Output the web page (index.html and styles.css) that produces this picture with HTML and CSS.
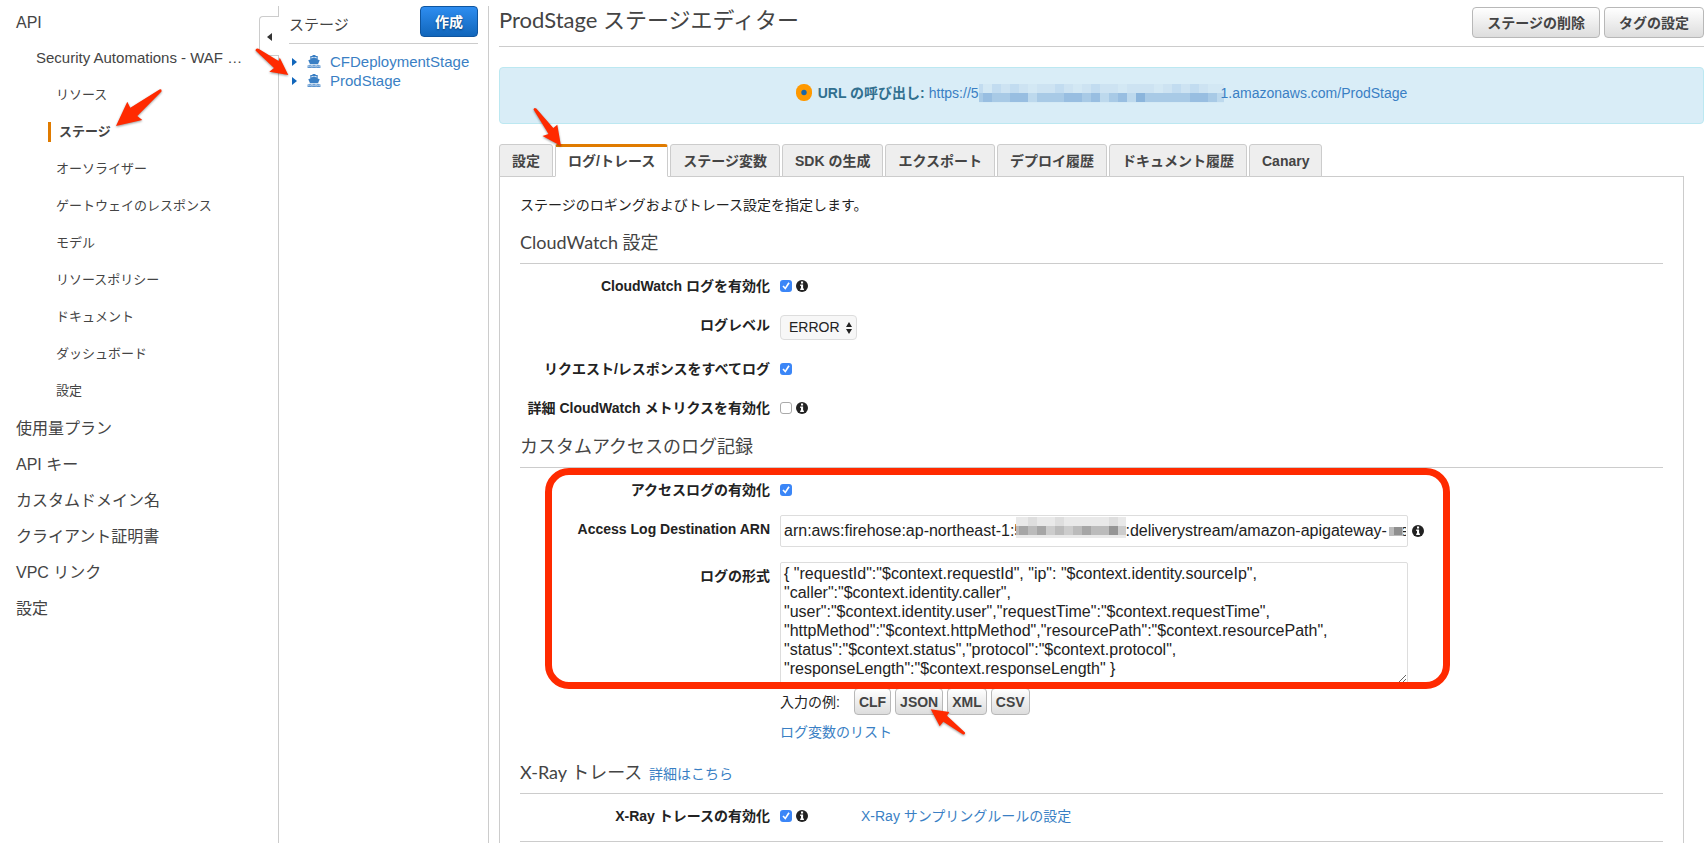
FILE: index.html
```html
<!DOCTYPE html>
<html lang="ja">
<head>
<meta charset="utf-8">
<title>ProdStage ステージエディター</title>
<link rel="stylesheet" href="styles.css">
</head>
<body>
<svg class="defs" aria-hidden="true">
  <symbol id="info" viewBox="0 0 12 12">
    <circle cx="6" cy="6" r="6" fill="#222"/>
    <path d="M5 1.600h2.100v1.800H5zM4.200 4.500h2.900v4h.8V10H4.200V8.500H5V6h-.8z" fill="#fff"/>
  </symbol>
  <symbol id="ship" viewBox="0 0 14 13">
    <path d="M5.500 0h3v1h2.200v3.400l2 .8-1.700 4.100H3L1.300 5.200l2-.8V1h2.200z" fill="#3a7fc4"/>
    <path d="M4.400 2.100h5.200v1.300L7 2.600l-2.600.8z" fill="#cfe0f2"/>
    <path d="M.5 12.900v-2.300c1 0 1.400-.8 2.200-.8s1.200.8 2.100.8 1.300-.8 2.200-.8 1.300.8 2.200.8 1.300-.8 2.100-.8 1.200.8 2.200.8v2.300z" fill="#5b94cf"/>
    <path d="M.5 11.900c1 0 1.400-.8 2.200-.8s1.200.8 2.100.8 1.300-.8 2.200-.8 1.300.8 2.200.8 1.300-.8 2.100-.8 1.200.8 2.200.8" fill="none" stroke="#fff" stroke-width=".5"/>
  </symbol>
</svg>
<div class="app">
  <nav class="sidebar">
    <a class="item" href="#">API</a>
    <a class="item api-name" href="#">Security Automations - WAF …</a>
    <ul class="sub">
      <li><a href="#">リソース</a></li>
      <li class="current"><a href="#">ステージ</a>
        <svg class="arrow arrow-nav" width="52" height="42" viewBox="0 0 52 42"><path d="M3 39 14.300 14.700l3 6L46.500 2.500q2.500-.7 2 2L24.300 29l5 4z"/></svg>
      </li>
      <li><a href="#">オーソライザー</a></li>
      <li><a href="#">ゲートウェイのレスポンス</a></li>
      <li><a href="#">モデル</a></li>
      <li><a href="#">リソースポリシー</a></li>
      <li><a href="#">ドキュメント</a></li>
      <li><a href="#">ダッシュボード</a></li>
      <li><a href="#">設定</a></li>
    </ul>
    <a class="item" href="#">使用量プラン</a>
    <a class="item" href="#">API キー</a>
    <a class="item" href="#">カスタムドメイン名</a>
    <a class="item" href="#">クライアント証明書</a>
    <a class="item" href="#">VPC リンク</a>
    <a class="item" href="#">設定</a>
    <button class="collapse" type="button" aria-label="折りたたむ"><svg width="5" height="8" viewBox="0 0 5 8"><path d="M5 0v8L0 4z" fill="#333"/></svg></button>
  </nav>

  <section class="stages">
    <header class="stages-head">
      <h2>ステージ</h2>
      <button class="btn primary" type="button">作成</button>
    </header>
    <ul class="tree">
      <li><svg width="5" height="8" viewBox="0 0 5 8"><path d="M0 0l5 4-5 4z" fill="#1166bb"/></svg><svg class="ship" width="14" height="13"><use href="#ship"/></svg><a href="#">CFDeploymentStage</a></li>
      <li><svg width="5" height="8" viewBox="0 0 5 8"><path d="M0 0l5 4-5 4z" fill="#1166bb"/></svg><svg class="ship" width="14" height="13"><use href="#ship"/></svg><a href="#">ProdStage</a>
        <svg class="arrow arrow-tree" width="40" height="34" viewBox="0 0 40 34"><path d="M2.500 3.500q0-2.500 3-1.800L25.700 14l1-3.500L35.300 28l-19-3.300 4.700-3.700z"/></svg>
      </li>
    </ul>
  </section>

  <main class="editor">
    <header class="editor-head">
      <h1>ProdStage ステージエディター</h1>
      <div class="actions">
        <button class="btn" type="button">ステージの削除</button>
        <button class="btn" type="button">タグの設定</button>
      </div>
    </header>

    <div class="invoke">
      <svg width="16" height="17" viewBox="0 0 16 17"><rect width="16" height="17" rx="7.500" fill="#f90"/><circle cx="8" cy="8.500" r="2.700" fill="#1a66a8"/></svg>
      <strong>URL の呼び出し:</strong>
      <a href="#">https://5<svg class="mosaic" width="245" height="19" viewBox="0 0 245 19" shape-rendering="crispEdges">
        <path d="M0 0h245v9H0z" fill="#cde3f2"/>
        <path d="M0 0h4v9H0zM13 0h9v9h-9zM31 0h9v9h-9zM76 0h9v9h-9zM112 0h9v9h-9zM193 0h9v9h-9zM211 0h9v9h-9z" fill="#c2dcf0"/>
        <path d="M4 0h9v9H4zM49 0h9v9h-9zM94 0h9v9h-9zM139 0h9v9h-9zM175 0h9v9h-9zM229 0h16v9h-16z" fill="#d3e8f4"/>
        <path d="M0 9h245v9H0z" fill="#a8cae6"/>
        <path d="M4 9h9v9H4zM31 9h18v9H31zM85 9h18v9H85zM112 9h9v9h-9zM139 9h9v9h-9zM211 9h18v9h-18z" fill="#98bee1"/>
        <path d="M157 9h9v9h-9z" fill="#8bb5dc"/>
        <path d="M49 9h9v9h-9zM121 9h9v9h-9zM148 9h9v9h-9zM238 9h7v9h-7z" fill="#bdd9ed"/>
        <path d="M0 18h245v1H0z" fill="#d5eaf5"/></svg>1.amazonaws.com/ProdStage</a>
    </div>

    <div class="tabs" role="tablist">
      <button type="button" role="tab">設定</button>
      <button type="button" role="tab" class="active" aria-selected="true">ログ/トレース<svg class="arrow arrow-tab" width="36" height="44" viewBox="0 0 36 44"><path d="M2.500 3.500q.5-2.500 2.800-1L22.300 22l4-3.300L30 40l-18.500-10 6-2z"/></svg></button>
      <button type="button" role="tab">ステージ変数</button>
      <button type="button" role="tab">SDK の生成</button>
      <button type="button" role="tab">エクスポート</button>
      <button type="button" role="tab">デプロイ履歴</button>
      <button type="button" role="tab">ドキュメント履歴</button>
      <button type="button" role="tab">Canary</button>
    </div>

    <form class="panel">
      <p class="lead">ステージのロギングおよびトレース設定を指定します。</p>

      <h3>CloudWatch 設定</h3>
      <div class="rows">
        <div class="row"><label for="cw">CloudWatch ログを有効化</label>
          <div class="control"><input type="checkbox" id="cw" checked><svg width="12" height="12"><use href="#info"/></svg></div></div>
        <div class="row"><label for="level">ログレベル</label>
          <div class="control"><div class="select"><select id="level"><option>ERROR</option></select><svg width="6" height="12" viewBox="0 0 6 12"><path d="M3 0l3 5H0zM3 12L0 7h6z" fill="#222"/></svg></div></div></div>
        <div class="row"><label for="full">リクエスト/レスポンスをすべてログ</label>
          <div class="control"><input type="checkbox" id="full" checked></div></div>
        <div class="row"><label for="metrics">詳細 CloudWatch メトリクスを有効化</label>
          <div class="control"><input type="checkbox" id="metrics"><svg width="12" height="12"><use href="#info"/></svg></div></div>
      </div>

      <h3>カスタムアクセスのログ記録</h3>
      <div class="rows access">
        <div class="row"><label for="acc">アクセスログの有効化</label>
          <div class="control"><input type="checkbox" id="acc" checked></div></div>
        <div class="row tall"><label for="arn">Access Log Destination ARN</label>
          <div class="control"><div class="arn"><input type="text" id="arn" value="arn:aws:firehose:ap-northeast-1:5&nbsp;&nbsp;&nbsp;&nbsp;&nbsp;&nbsp;&nbsp;&nbsp;&nbsp;&nbsp;&nbsp;&nbsp;&nbsp;&nbsp;&nbsp;&nbsp;&nbsp;&nbsp;&nbsp;&nbsp;&nbsp;&nbsp;&nbsp;:deliverystream/amazon-apigateway-&nbsp;&nbsp;&nbsp;e">
            <svg class="mask-id" width="110" height="21" viewBox="0 0 110 21" shape-rendering="crispEdges"><path d="M0 0h110v21H0z" fill="#e9e9e9"/><path d="M12 0h9v9h-9zM39 0h9v9h-9zM93 0h9v9h-9z" fill="#dedede"/><path d="M0 9h110v9H0z" fill="#bbb"/><path d="M3 9h9v9H3zM21 9h9v9h-9zM66 9h9v9h-9z" fill="#a6a6a6"/><path d="M93 9h9v9h-9z" fill="#959595"/><path d="M30 9h9v9h-9zM48 9h9v9h-9zM102 9h8v9h-8z" fill="#ccc"/></svg>
            <svg class="mask-tail" width="14" height="10" viewBox="0 0 14 10" shape-rendering="crispEdges"><path d="M0 1h14v9H0z" fill="#bbb"/><path d="M5 1h8v8H5z" fill="#8f8f8f"/></svg>
          </div><svg width="12" height="12"><use href="#info"/></svg></div></div>
        <div class="row tall"><label for="fmt">ログの形式</label>
          <div class="control stack"><textarea id="fmt" spellcheck="false">{ "requestId":"$context.requestId", "ip": "$context.identity.sourceIp",
"caller":"$context.identity.caller",
"user":"$context.identity.user","requestTime":"$context.requestTime",
"httpMethod":"$context.httpMethod","resourcePath":"$context.resourcePath",
"status":"$context.status","protocol":"$context.protocol",
"responseLength":"$context.responseLength" }</textarea>
            <div class="examples"><span>入力の例:</span>
              <button class="btn small" type="button">CLF</button>
              <button class="btn small" type="button">JSON<svg class="arrow arrow-json" width="42" height="34" viewBox="0 0 42 34"><path d="M2.700 3.300 21.300 6 19 9.700 37 26.500q.5 2.500-2 2L15.300 15.700l-3.600 4.600z"/></svg></button>
              <button class="btn small" type="button">XML</button>
              <button class="btn small" type="button">CSV</button>
            </div>
            <a class="vars" href="#">ログ変数のリスト</a>
          </div></div>
        <div class="highlight" aria-hidden="true"></div>
      </div>

      <h3>X-Ray トレース <a href="#">詳細はこちら</a></h3>
      <div class="rows">
        <div class="row"><label for="xray">X-Ray トレースの有効化</label>
          <div class="control"><input type="checkbox" id="xray" checked><svg width="12" height="12"><use href="#info"/></svg><a class="sampling" href="#">X-Ray サンプリングルールの設定</a></div></div>
      </div>
      <hr>
    </form>
  </main>
</div>
</body>
</html>
```

FILE: styles.css
```css
* { box-sizing: border-box; }

body {
  margin: 0;
  overflow: hidden;
  background: #fff;
  color: #222;
  font: 14px/20px "Liberation Sans", "Noto Sans CJK JP", sans-serif;
}

a { color: #3a7fc4; text-decoration: none; }
ul { list-style: none; margin: 0; padding: 0; }
h1, h2, h3, p { margin: 0; font-weight: normal; }
svg { flex: none; }
button, input, select, textarea { font: inherit; color: inherit; }

.defs { position: absolute; width: 0; height: 0; }

.app { display: flex; height: 100vh; padding-top: 6px; }

/* Navigation */
.sidebar {
  position: relative;
  flex: none;
  width: 279px;
  border-right: 1px solid #ccc;
}
.item {
  display: block;
  padding-left: 16px;
  font-size: 16px;
  line-height: 36px;
  color: #444;
}
.item:first-child { line-height: 34px; }
.api-name { padding-left: 36px; font-size: 15px; }
.sub { padding-bottom: 2px; }
.sub li {
  position: relative;
  display: flex;
  align-items: center;
  height: 37px;
  padding-left: 56px;
  font-size: 13px;
}
.sub a { color: #444; }
.sub .current { padding-left: 48px; font-weight: bold; }
.sub .current a { padding-left: 8px; border-left: 3px solid #e07b00; }
.collapse {
  position: absolute;
  top: 10px;
  right: -1px;
  width: 20px;
  height: 40px;
  padding: 0;
  border: 1px solid #ccc;
  border-right: 0;
  border-radius: 4px 0 0 4px;
  background: #fff;
}

/* Stage list */
.stages {
  flex: none;
  width: 210px;
  padding: 0 10px;
  border-right: 1px solid #ccc;
}
.stages-head {
  display: flex;
  justify-content: space-between;
  align-items: flex-start;
  height: 38px;
  border-bottom: 1px solid #ccc;
}
.stages-head h2 { font-size: 15px; line-height: 38px; color: #444; }
.tree { padding-top: 8px; }
.tree li {
  position: relative;
  display: flex;
  align-items: center;
  height: 19px;
  padding-left: 3px;
  font-size: 15px;
}
.ship { margin: 0 9px 0 10px; }

/* Buttons */
.btn {
  position: relative;
  height: 31px;
  padding: 0 14px;
  border: 1px solid #b8b8b8;
  border-radius: 4px;
  background: linear-gradient(#fff, #ddd);
  color: #444;
  font-weight: bold;
}
.btn.primary {
  border-color: #0f559f;
  background: linear-gradient(#2e8df0, #1166bb);
  color: #fff;
  text-shadow: 0 1px 2px #0a3c70;
}
.btn.small { height: 27px; padding: 0 4px; }

/* Editor */
.editor {
  flex: 1;
  min-width: 0;
  display: flex;
  flex-direction: column;
  padding-left: 10px;
}
.editor-head {
  display: flex;
  justify-content: space-between;
  height: 41px;
  border-bottom: 1px solid #ccc;
}
.editor-head h1 {
  font: 22px/28px Lato, "Noto Sans CJK JP", sans-serif;
  color: #444;
}
.actions { display: flex; gap: 4px; padding-top: 1px; }
.invoke {
  display: flex;
  justify-content: center;
  align-items: center;
  height: 57px;
  margin: 20px 0;
  padding-bottom: 6px;
  border: 1px solid #bce8f1;
  border-radius: 4px;
  background: #d9edf7;
}
.invoke strong { margin: 0 4px 0 6px; color: #31708f; }
.mosaic { margin-right: -3px; vertical-align: -5px; }

.tabs { display: flex; gap: 2px; }
.tabs button {
  position: relative;
  height: 33px;
  margin-bottom: -1px;
  padding: 0 12px;
  border: 1px solid #ccc;
  border-radius: 3px 3px 0 0;
  background: #eee;
  color: #444;
  font-weight: bold;
}
.tabs .active {
  padding-bottom: 2px;
  border-top: 3px solid #e07b00;
  border-bottom-color: #fff;
  background: #fff;
  z-index: 1;
}

.panel {
  flex: 1 0 auto;
  margin-right: 20px;
  padding: 18px 20px 0;
  border: 1px solid #ccc;
  border-bottom: 0;
}
.panel h3 {
  margin-top: 15px;
  padding-bottom: 9px;
  border-bottom: 1px solid #ccc;
  font: 18px/24px Lato, "Noto Sans CJK JP", sans-serif;
  color: #444;
}
.panel h3 a {
  margin-left: 2px;
  font: 14px/20px "Liberation Sans", "Noto Sans CJK JP", sans-serif;
}
.rows {
  position: relative;
  display: flex;
  flex-direction: column;
  gap: 19px;
  padding: 12px 0 1px;
}
.rows.access { gap: 15px; padding-bottom: 3px; }
.row {
  display: grid;
  grid-template-columns: 250px minmax(0, 1fr);
  column-gap: 10px;
  align-items: start;
}
.row label { font-weight: bold; text-align: right; }
.row.tall label { padding-top: 4px; }
.control { display: flex; align-items: center; gap: 4px; min-height: 20px; }

input[type="checkbox"] {
  appearance: none;
  flex: none;
  width: 12px;
  height: 12px;
  margin: 0;
  border: 1px solid #aaa;
  border-radius: 3px;
  background: #fff;
}
input[type="checkbox"]:checked {
  border: 0;
  background: #3b86f7;
}
input[type="checkbox"]:checked::after {
  content: "";
  display: block;
  width: 12px;
  height: 12px;
  background: #fff;
  clip-path: polygon(20% 54%, 31% 45%, 43% 60%, 69% 19%, 81% 27%, 45% 82%);
}

.select { position: relative; }
.select select {
  display: block;
  appearance: none;
  width: 77px;
  height: 25px;
  padding: 0 8px 2px;
  border: 1px solid #ddd;
  border-radius: 4px;
  background: #f7f7f7;
}
.select svg { position: absolute; right: 5px; top: 7px; pointer-events: none; }

.arn { position: relative; width: 628px; }
.arn input, .stack textarea {
  display: block;
  width: 100%;
  padding: 0 1px 0 3px;
  border: 1px solid #ddd;
  border-radius: 2px;
  background: #fff;
  font-size: 16px;
  line-height: 19px;
}
.arn input { height: 32px; }
.mask-id { position: absolute; left: 236px; top: 2px; }
.mask-tail { position: absolute; right: 5px; top: 11px; }
.control.stack { display: block; width: 628px; }
.stack textarea { height: 122px; padding-top: 1px; overflow: hidden; }
.examples { display: flex; align-items: center; gap: 4px; margin-top: 4px; }
.examples span { margin-right: 10px; }
.vars { display: block; margin-top: 7px; }
.sampling { margin-left: 49px; }
.panel hr { margin: 14px 0 0; border: 0; border-top: 1px solid #ccc; }

/* Annotations */
.highlight {
  position: absolute;
  left: 25px;
  top: 0;
  width: 905px;
  height: 221px;
  border: 7px solid #ff2a00;
  border-radius: 24px;
  pointer-events: none;
}
.arrow {
  position: absolute;
  z-index: 2;
  fill: #ff2a00;
  filter: drop-shadow(0 1px 1px rgba(0, 0, 0, .4));
  pointer-events: none;
}
.arrow-nav { left: 113px; top: -26px; }
.arrow-tree { left: -36px; top: -24px; }
.arrow-tab { left: -25px; top: -41px; }
.arrow-json { left: 32px; top: 17px; }
```
